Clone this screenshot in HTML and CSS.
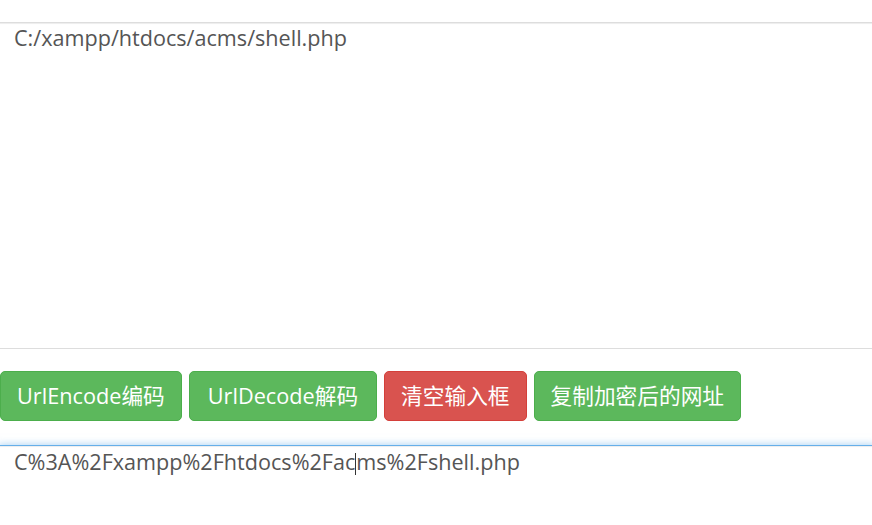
FILE: index.html
```html
<!DOCTYPE html>
<html lang="zh-CN">
<head>
<meta charset="utf-8">
<title>UrlEncode</title>
<link rel="stylesheet" href="styles.css">
</head>
<body>
<div class="page">
  <div class="field field-top">C:/xampp/htdocs/acms/shell.php</div>
  <div class="actions">
    <button class="btn btn-success">UrlEncode编码</button>
    <button class="btn btn-success btn-wide">UrlDecode解码</button>
    <button class="btn btn-danger">清空输入框</button>
    <button class="btn btn-success">复制加密后的网址</button>
  </div>
  <div class="field field-bottom">C%3A%2Fxampp%2Fhtdocs%2Fac<span class="caret"></span>ms%2Fshell.php</div>
</div>
</body>
</html>
```
FILE: styles.css
```css
html, body {
  margin: 0;
  padding: 0;
  background: #fff;
  overflow: hidden;
}
.page {
  width: 872px;
  height: 525px;
  overflow: hidden;
  padding-top: 22px;
  box-sizing: border-box;
  font-family: "Open Sans", "Noto Sans CJK SC", sans-serif;
}
.field {
  margin-left: -2px;
  margin-right: -4px;
  border: 1px solid #ddd;
  border-left: 0;
  border-right: 0;
  color: #555;
  font-size: 21.6px;
  line-height: 28px;
  padding: 1px 0 0 16px;
  box-sizing: border-box;
  white-space: nowrap;
}
.field-top {
  height: 327px;
  box-shadow: inset 0 1px 1px rgba(0,0,0,.075);
}
.actions {
  display: flex;
  gap: 7px;
  margin-top: 22px;
}
.btn {
  font-family: "Open Sans", "Noto Sans CJK SC", sans-serif;
  font-size: 21.7px;
  line-height: 28px;
  height: 50px;
  padding: 0 16px;
  border-radius: 5px;
  color: #fff;
  border: 1px solid transparent;
  cursor: pointer;
}
.btn-wide {
  padding: 0 18px;
}
.btn-success {
  background: #5cb85c;
  border-color: #4cae4c;
}
.btn-danger {
  background: #d9534f;
  border-color: #d43f3a;
}
.field-bottom {
  margin-top: 24px;
  height: 120px;
  border-color: #66afe9;
  padding-top: 2px;
  box-shadow: inset 0 1px 1px rgba(0,0,0,.075), 0 0 8px rgba(102,175,233,.6);
}
.caret {
  display: inline-block;
  width: 0;
  height: 22px;
  border-left: 1px solid #333;
  vertical-align: -5px;
}
```
